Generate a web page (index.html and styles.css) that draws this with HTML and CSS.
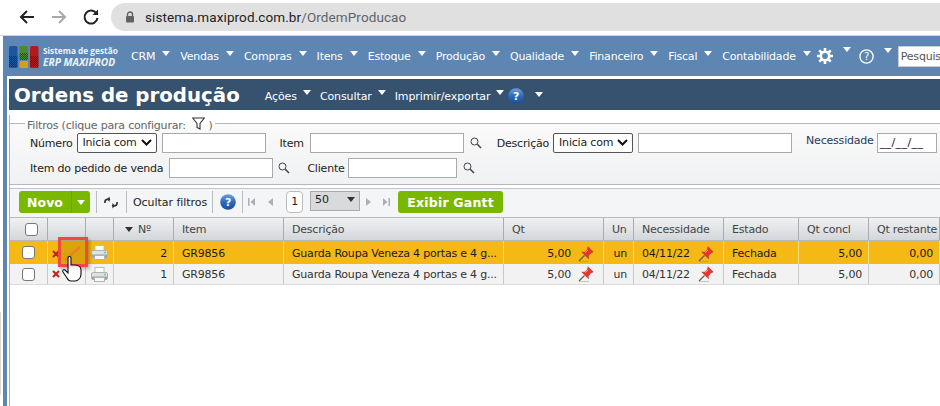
FILE: index.html
```html
<!DOCTYPE html>
<html lang="pt">
<head>
<meta charset="utf-8">
<title>Ordens de produção</title>
<link rel="stylesheet" href="styles.css">
</head>
<body>
<svg class="defs" width="0" height="0">
  <defs>
    <pattern id="dith" width="2" height="2" patternUnits="userSpaceOnUse"><rect width="1" height="1" fill="#0c1420"/><rect x="1" y="1" width="1" height="1" fill="#0c1420"/></pattern>
    <linearGradient id="gloss" x1="0" y1="0" x2="0" y2="1"><stop offset="0" stop-color="#6f9fe0"/><stop offset=".55" stop-color="#2a66b8"/><stop offset="1" stop-color="#1d4f9a"/></linearGradient>
    <g id="prn"><rect x="4" y="0.500" width="9" height="6" fill="#fff" stroke="#b8bcbe"/><rect x="0.500" y="5.500" width="16" height="7" rx="1.500" fill="#dfe2e3" stroke="#aeb3b6"/><rect x="1" y="9.500" width="15" height="3" fill="#9ea4a8"/><rect x="3.500" y="10.500" width="10" height="4" fill="#f8f8f8" stroke="#b0b4b6"/><circle cx="14" cy="7.500" r="1" fill="#7cc47a"/></g>
    <g id="pin"><path d="M1 15 6.500 9.500" stroke="#6b5d4e" stroke-width="1.200"/><path d="M1 15.500h10" stroke="#8a7c6a" stroke-width=".8" opacity=".5"/><path d="M10 .8l5.200 5.200-2.200.7-2.800 3.500.3 2.500L3.800 6.100l2.500.2 3.200-2.900z" fill="#e8362e" stroke="#b81c1c" stroke-width=".5"/><path d="M7 6.500l3-2.500" stroke="#ffb0a0" stroke-width="1"/></g>
  </defs>
</svg>
<header class="chrome">
  <svg class="cicon" width="18" height="16" viewBox="0 0 18 16"><path d="M16 8H3M9 2 3 8l6 6" fill="none" stroke="#222" stroke-width="2"/></svg>
  <svg class="cicon" width="18" height="16" viewBox="0 0 18 16"><path d="M2 8h13M9 2l6 6-6 6" fill="none" stroke="#a8a8a8" stroke-width="2"/></svg>
  <svg class="cicon" width="18" height="18" viewBox="0 0 18 18"><path d="M14.500 5.500A6.500 6.500 0 1 0 15.500 10" fill="none" stroke="#222" stroke-width="2"/><path d="M16 1.500V7h-5.500z" fill="#222"/></svg>
  <div class="omni">
    <svg width="10" height="12" viewBox="0 0 10 12"><path d="M2.500 5V3.500a2.500 2.500 0 0 1 5 0V5" fill="none" stroke="#5f6368" stroke-width="1.400"/><rect x="1" y="5" width="8" height="6.500" rx="1" fill="#5f6368"/></svg>
    <span class="url">sistema.maxiprod.com.br<span class="path">/OrdemProducao</span></span>
  </div>
</header>
<div class="page">
  <nav class="nav">
    <div class="logo">
      <svg width="30" height="22" viewBox="0 0 30 22"><rect x="0" y="0" width="8.500" height="22" rx="1.500" fill="#1c56a0"/><rect x="10.500" y="0" width="8.500" height="14" rx="1" fill="#4c8a2c"/><rect x="10.500" y="15" width="8.500" height="7" rx="1" fill="#dc9c14"/><rect x="21" y="0" width="8.500" height="22" rx="1.500" fill="#b01c1c"/><rect x="0" y="10" width="8.500" height="11" fill="url(#dith)" opacity=".55"/><rect x="10.500" y="7" width="8.500" height="7" fill="url(#dith)" opacity=".5"/><rect x="21" y="10" width="8.500" height="11" fill="url(#dith)" opacity=".45"/></svg>
      <div class="logotext"><span>Sistema de gestão</span><b>ERP MAXIPROD</b></div>
    </div>
    <span class="mi">CRM</span><span class="mi">Vendas</span><span class="mi">Compras</span><span class="mi">Itens</span><span class="mi">Estoque</span><span class="mi">Produção</span><span class="mi">Qualidade</span><span class="mi">Financeiro</span><span class="mi">Fiscal</span><span class="mi">Contabilidade</span>
    <span class="mi icon gear"><svg width="16" height="16" viewBox="0 0 16 16"><circle cx="8" cy="8" r="4.200" fill="none" stroke="#fff" stroke-width="2.600"/><path d="M8 0v3M8 13v3M0 8h3M13 8h3M2.300 2.300l2.200 2.200M11.500 11.500l2.200 2.200M13.700 2.300l-2.200 2.200M4.500 11.500l-2.200 2.200" stroke="#fff" stroke-width="2.600"/></svg></span>
    <span class="mi icon"><svg width="15" height="15" viewBox="0 0 15 15"><circle cx="7.500" cy="7.500" r="6.600" fill="none" stroke="#fff" stroke-width="1.300"/><text x="7.500" y="11" class="qmark">?</text></svg></span>
    <div class="search">Pesquisar</div>
  </nav>
  <div class="titlebar">
    <h1>Ordens de produção</h1>
    <span class="mi sub">Ações</span><span class="mi sub">Consultar</span><span class="mi sub last">Imprimir/exportar</span>
    <svg class="help" width="16" height="16" viewBox="0 0 16 16"><circle cx="8" cy="8" r="7.800" fill="url(#gloss)"/><text x="8" y="12" class="qmark bold">?</text></svg>
    <i class="caret helpcaret"></i>
  </div>
  <div class="content">
    <fieldset class="filters">
      <legend>Filtros (clique para configurar: <svg width="13" height="13" viewBox="0 0 13 13"><path d="M.7 1h11.600L8 6.500V12L5 10.500v-4z" fill="none" stroke="#333" stroke-width="1.100"/></svg> )</legend>
      <div class="frow">
        <label>Número</label>
        <span class="sel s1">Inicia com<svg width="11" height="7" viewBox="0 0 11 7"><path d="M1 1l4.500 4.500L10 1" fill="none" stroke="#111" stroke-width="2"/></svg></span>
        <span class="inp w104"></span>
        <label class="l-item">Item</label>
        <span class="inp w154 item"></span>
        <svg class="lens" width="12" height="12" viewBox="0 0 12 12"><circle cx="4.500" cy="4.500" r="3.500" fill="none" stroke="#444"/><path d="M7.300 7.300 11 11" stroke="#444" stroke-width="1.600"/></svg>
        <label class="l-desc">Descrição</label>
        <span class="sel s2">Inicia com<svg width="11" height="7" viewBox="0 0 11 7"><path d="M1 1l4.500 4.500L10 1" fill="none" stroke="#111" stroke-width="2"/></svg></span>
        <span class="inp w154"></span>
        <label class="l-nec">Necessidade</label>
        <span class="inp date">__/__/__</span>
      </div>
      <div class="frow second">
        <label>Item do pedido de venda</label>
        <span class="inp w104 ped"></span>
        <svg class="lens near" width="12" height="12" viewBox="0 0 12 12"><circle cx="4.500" cy="4.500" r="3.500" fill="none" stroke="#444"/><path d="M7.300 7.300 11 11" stroke="#444" stroke-width="1.600"/></svg>
        <label class="l-cli">Cliente</label>
        <span class="inp w109"></span>
        <svg class="lens" width="12" height="12" viewBox="0 0 12 12"><circle cx="4.500" cy="4.500" r="3.500" fill="none" stroke="#444"/><path d="M7.300 7.300 11 11" stroke="#444" stroke-width="1.600"/></svg>
      </div>
    </fieldset>
    <div class="toolbar">
      <div class="btn novo"><span class="btn-main">Novo</span><span class="btn-drop"><i class="caret"></i></span></div>
      <span class="sep"></span>
      <svg class="tool refresh" width="14" height="13" viewBox="0 0 15 13"><path d="M6.500 3H4a3 3 0 0 0-3 3v1" fill="none" stroke="#333" stroke-width="1.800"/><path d="M8.500 10H11a3 3 0 0 0 3-3V6" fill="none" stroke="#333" stroke-width="1.800"/><path d="M6 0v6L3 3zM9 7v6l3-3z" fill="#333"/></svg>
      <span class="sep"></span>
      <span class="tbtext">Ocultar filtros</span>
      <span class="sep"></span>
      <svg class="tool qhelp" width="16" height="16" viewBox="0 0 16 16"><circle cx="8" cy="8" r="7.800" fill="url(#gloss)"/><text x="8" y="12" class="qmark bold">?</text></svg>
      <span class="sep"></span>
      <span class="pager">
        <svg class="pfirst" width="7" height="8" viewBox="0 0 7 8"><path d="M0 0h1.500v8H0zM7 0v8L2.500 4z" fill="#aab0b6"/></svg>
        <svg class="pprev" width="5" height="8" viewBox="0 0 5 8"><path d="M5 0v8L0 4z" fill="#aab0b6"/></svg>
        <span class="pagenum">1</span>
        <span class="perpage">50<i class="caret dark"></i></span>
        <svg class="pnext" width="5" height="8" viewBox="0 0 5 8"><path d="M0 0v8l5-4z" fill="#aab0b6"/></svg>
        <svg class="plast" width="7" height="8" viewBox="0 0 7 8"><path d="M0 0v8l4.500-4zM5.500 0H7v8H5.500z" fill="#aab0b6"/></svg>
      </span>
      <div class="btn gantt">Exibir Gantt</div>
    </div>
    <div class="grid">
      <div class="row head">
        <div class="c"><span class="cb"></span></div><div class="c"></div><div class="c"></div>
        <div class="c numh"><i class="caret dark"></i>Nº</div><div class="c">Item</div><div class="c">Descrição</div><div class="c">Qt</div><div class="c">Un</div><div class="c">Necessidade</div><div class="c">Estado</div><div class="c">Qt concl</div><div class="c">Qt restante</div>
      </div>
      <div class="row sel-row">
        <div class="c check"><span class="cb"></span></div>
        <div class="c acts"><svg class="x" width="8" height="8" viewBox="0 0 8 8"><path d="M1 1l6 6M7 1 1 7" stroke="#c81e1e" stroke-width="2"/></svg></div>
        <div class="c center"><svg width="17" height="15" viewBox="0 0 17 15"><use href="#prn"/></svg></div>
        <div class="c right">2</div><div class="c">GR9856</div><div class="c clip">Guarda Roupa Veneza 4 portas e 4 g...</div>
        <div class="c right pin">5,00<svg width="16" height="16" viewBox="0 0 16 16"><use href="#pin"/></svg></div>
        <div class="c right">un</div><div class="c date-c">04/11/22<svg width="16" height="16" viewBox="0 0 16 16"><use href="#pin"/></svg></div><div class="c">Fechada</div><div class="c right">5,00</div><div class="c right">0,00</div>
      </div>
      <div class="row plain">
        <div class="c check"><span class="cb"></span></div>
        <div class="c acts"><svg class="x" width="8" height="8" viewBox="0 0 8 8"><path d="M1 1l6 6M7 1 1 7" stroke="#c81e1e" stroke-width="2"/></svg></div>
        <div class="c center"><svg width="17" height="15" viewBox="0 0 17 15"><use href="#prn"/></svg></div>
        <div class="c right">1</div><div class="c">GR9856</div><div class="c clip">Guarda Roupa Veneza 4 portas e 4 g...</div>
        <div class="c right pin">5,00<svg width="16" height="16" viewBox="0 0 16 16"><use href="#pin"/></svg></div>
        <div class="c right">un</div><div class="c date-c">04/11/22<svg width="16" height="16" viewBox="0 0 16 16"><use href="#pin"/></svg></div><div class="c">Fechada</div><div class="c right">5,00</div><div class="c right">0,00</div>
      </div>
    </div>
  </div>
  <div class="pointer">
    <svg class="pencil" width="20" height="20" viewBox="0 0 20 20"><path d="M2 18 17 5" stroke="#f07a28" stroke-width="2.200"/></svg>
    <svg class="hand" width="20" height="27" viewBox="0 0 20 27"><path d="M6 15V3a1.500 1.500 0 0 1 3 0v7h3c4 0 7 1 7 5v4c0 4-3 7-6 7H9c-2 0-3-1-4-3l-4-6c-1-2 1-3 2-2l3 3z" fill="#fff" fill-opacity=".82" stroke="#111" stroke-width="1.100"/></svg>
  </div>
</div>
<div class="edge"></div>
</body>
</html>
```
FILE: styles.css
```css
* { box-sizing: border-box; }
html, body { margin: 0; height: 100%; }
body { position: relative; width: 940px; height: 406px; overflow: hidden; background: #fff; font: 11px "DejaVu Sans", sans-serif; letter-spacing: -.2px; color: #222; }
.defs { position: absolute; }
.edge { position: absolute; left: 0; top: 312px; width: 1px; height: 83px; background: #e0d8d0; }
.chrome { height: 36px; display: flex; align-items: center; padding: 0 0 2px 18px; border-bottom: 1px solid #d2d2d2; background: #fff; }
.cicon { margin-right: 14px; flex: none; }
.omni { margin-left: -3px; flex: 1; height: 28px; background: #e0e0e0; border-radius: 14px 0 0 14px; display: flex; align-items: center; padding-left: 14px; gap: 10px; }
.url { font: 13.500px "Roboto", sans-serif; letter-spacing: .1px; color: #222; }
.path { color: #5f6368; }
.page { position: relative; height: 370px; margin-left: 3px; border-left: 4px solid #5d86b2; }
.nav { margin-left: -4px; height: 40px; background: #5d86b2; display: flex; align-items: center; padding-left: 6px; color: #fff; white-space: nowrap; overflow: hidden; }
.logo { display: flex; align-items: center; gap: 4px; width: 122px; flex: none; padding-top: 1px; }
.logotext { display: flex; flex-direction: column; color: #eef3f8; line-height: 12px; letter-spacing: 0; }
.logotext span { font: bold 8.300px/11px "Open Sans", sans-serif; }
.logotext b { font: italic bold 10.200px/12px "Open Sans", sans-serif; }
.mi { position: relative; font: 11px "DejaVu Sans", sans-serif; color: #fff; padding-right: 25px; flex: none; letter-spacing: -.2px; }
.mi::after { content: ""; position: absolute; right: 10px; top: 1px; border: 4.500px solid transparent; border-top: 5px solid #fff; border-bottom: 0; }
.mi.icon { padding-right: 26px; display: flex; }
.mi.icon::after { right: 8px; top: -1px; }
.gear { margin-left: -4px; }
.search { flex: none; width: 80px; height: 21px; background: #fff; color: #555; margin-left: -2px; padding: 3px 0 0 2px; font-size: 11px; overflow: hidden; border: 1px solid #ccc; }
.qmark { font: 10px "DejaVu Sans", sans-serif; fill: #fff; text-anchor: middle; }
.qmark.bold { font-weight: bold; font-size: 11px; }
.titlebar { margin: 3px 0 0 2px; height: 31px; background: #36526f; display: flex; align-items: center; color: #fff; padding-left: 5px; }
h1 { margin: 1px 25px 0 0; font: bold 19.800px "DejaVu Sans", sans-serif; letter-spacing: 0; white-space: nowrap; }
.mi.sub { padding-right: 23px; margin-top: 3px; letter-spacing: -.1px; }
.mi.sub::after { right: 9px; top: 0; }
.mi.sub.last { padding-right: 18px; }
.mi.sub.last::after { right: 4px; }
.help { flex: none; margin-top: 3px; }
.caret { display: inline-block; border: 4.500px solid transparent; border-top: 5px solid #fff; border-bottom: 0; }
.helpcaret { margin: 0 0 0 11px; }
.caret.dark { border-top-color: #333; }
.content { margin-left: 2px; border-left: 1px solid #a8adc8; height: 296px; }
.filters { margin: 5px 0 0; padding: 0 0 0 20px; height: 70px; border: 0; border-top: 1px solid #b4b8bc; border-bottom: 1px solid #b4b8bc; background: linear-gradient(#fafafa, #f0f1f3); min-width: 0; }
.filters legend { margin-left: -5px; padding: 2px 2px 0; color: #666; font-size: 11px; line-height: 13px; }
.filters legend svg { vertical-align: -1px; margin-left: 3px; }
.frow { display: flex; align-items: center; height: 22px; white-space: nowrap; }
.frow.second { margin-top: 3px; }
.sel { display: flex; align-items: center; justify-content: space-between; height: 20px; background: #fff; border: 1px solid #555; border-radius: 2px; padding: 0 4px 2px 5px; color: #222; }
.s1 { width: 80px; margin-left: 4px; }
.s2 { width: 80px; margin-left: 4px; }
.inp { display: block; height: 20px; background: #fff; border: 1px solid #a9a9a9; margin-left: 5px; flex: none; }
.w104 { width: 104px; }
.w154 { width: 154px; margin-left: 5px; }
.w154.item { margin-left: 6px; }
.w109 { width: 109px; margin-left: 3px; }
.ped { margin-left: 6px; }
.l-item { margin-left: 14px; }
.l-desc { margin-left: 15px; }
.l-nec { margin-left: 14px; margin-top: -5px; color: #1f3a5a; }
.date { width: 60px; margin-left: 3px; padding: 2px 0 0 2px; letter-spacing: .4px; }
.lens { margin-left: 6px; flex: none; }
.lens.near { margin-left: 5px; }
.l-cli { margin-left: 17px; }
.toolbar { margin: 3px 0 0; height: 29px; display: flex; align-items: center; border-top: 1px solid #c0c4c8; padding: 0 0 2px 9px; background: #f4f5f6; }
.btn { background: #7ab800; color: #fff; font-weight: bold; border-radius: 3px; height: 22px; display: flex; align-items: center; font-size: 12.500px; letter-spacing: 0; flex: none; }
.novo { width: 71px; }
.btn-main { width: 52px; text-align: center; }
.btn-drop { flex: 1; height: 100%; border-left: 1px solid #6ca300; display: flex; align-items: center; justify-content: center; }
.sep { width: 1px; height: 22px; background: #b8bcc0; flex: none; }
.novo + .sep { margin-left: 6px; }
.tool { flex: none; }
.refresh { margin: 0 8px 0 7px; }
.qhelp { margin: 0 6px 0 7px; }
.tbtext { padding: 0 5px 0 6px; letter-spacing: -.05px; }
.pager { display: flex; align-items: center; }
.pfirst { margin-left: 5px; }
.pprev { margin-left: 13px; }
.pagenum { width: 17px; height: 22px; border: 1px solid #bbb; border-radius: 4px; background: #fff; text-align: center; line-height: 20px; margin-left: 13px; }
.perpage { width: 50px; height: 20px; background: #d8dadc; border: 1px solid #aaa; margin: -2px 0 0 7px; padding: 0 4px 3px 4px; display: flex; align-items: center; justify-content: space-between; }
.pnext { margin-left: 6px; }
.plast { margin-left: 12px; }
.gantt { width: 105px; margin-left: 8px; justify-content: center; white-space: nowrap; letter-spacing: .2px; }
.grid { width: 930px; }
.row { display: grid; grid-template-columns: 38px 38px 28px 60px 110px 220px 100px 30px 90px 75px 70px 71px; }
.c { display: flex; align-items: center; padding: 2px 6px 0 8px; border-right: 1px solid #c6c9cc; overflow: hidden; white-space: nowrap; }
.head { height: 24px; color: #444; background: linear-gradient(#f0f1f2, #d3d6da); border-top: 1px solid #b6babf; border-bottom: 1px solid #b6babf; }
.head .c { border-right-color: #a8acb0; padding-top: 0; }
.head .c:first-child { padding: 0 0 0 15px; }
.numh { gap: 5px; padding-left: 11px; }
.cb { display: block; width: 13px; height: 13px; border: 1px solid #777; border-radius: 3px; background: #fff; }
.sel-row { height: 23px; background: #f4b914; color: #1a1a1a; }
.sel-row .c { border-right-color: #f9dd80; }
.plain { height: 21px; background: #f2f2f2; color: #333; border-bottom: 1px solid #dcdcdc; }
.plain .c { padding-top: 0; }
.check { padding: 0 0 0 12px; }
.center { justify-content: center; padding: 0; }
.right { justify-content: flex-end; }
.acts { padding-left: 4px; }
.x { flex: none; }
.pin { padding-right: 9px; gap: 7px; }
.date-c { gap: 8px; }
.pointer { position: absolute; left: 51px; top: 201px; width: 30px; height: 30px; border: 3px solid #f04a40; background: rgba(170,120,0,.35); box-shadow: 2px 2px 3px rgba(0,0,0,.25); display: flex; align-items: center; justify-content: center; }
.hand { position: absolute; left: 1px; top: 15px; }
```
